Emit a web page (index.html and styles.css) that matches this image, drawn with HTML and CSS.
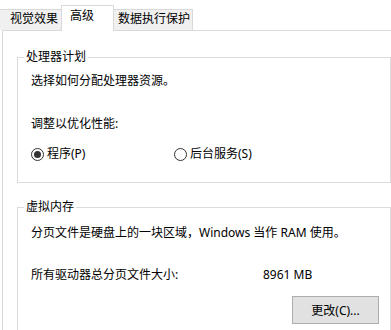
FILE: index.html
```html
<!DOCTYPE html>
<html lang="zh-CN">
<head>
  <meta charset="UTF-8">
  <title>性能选项 - 高级</title>
  <link rel="stylesheet" href="styles.css">
</head>
<body>

<div class="dialog">
  <!-- Tabs -->
  <div class="tabs">
    <div class="tab tab-visual">视觉效果</div>
    <div class="tab tab-advanced active">高级</div>
    <div class="tab tab-dep">数据执行保护</div>
  </div>

  <div class="panel">
    <!-- Processor scheduling -->
    <fieldset class="group group-cpu">
      <legend>处理器计划</legend>
      <p class="line">选择如何分配处理器资源。</p>
      <p class="line line-adjust">调整以优化性能:</p>
      <div class="radio-row">
        <label class="radio radio-programs">
          <span class="radio-mark checked"></span>程序(P)
        </label>
        <label class="radio">
          <span class="radio-mark"></span>后台服务(S)
        </label>
      </div>
    </fieldset>

    <!-- Virtual memory -->
    <fieldset class="group group-vm">
      <legend>虚拟内存</legend>
      <p class="line">分页文件是硬盘上的一块区域，Windows 当作 RAM 使用。</p>
      <div class="size-row">
        <span class="size-label">所有驱动器总分页文件大小:</span>
        <span class="size-value">8961 MB</span>
      </div>
      <div class="button-row">
        <button class="btn">更改(C)...</button>
      </div>
    </fieldset>
  </div>
</div>

</body>
</html>
```

FILE: styles.css
```css
html, body {
  margin: 0;
  background: #fff;
  overflow: hidden;
}

body {
  font-family: "Noto Sans", "Noto Sans CJK SC", sans-serif;
  font-size: 12px;
  line-height: 16px;
  color: #000;
  width: 391px;
  height: 330px;
}

* {
  box-sizing: border-box;
}

.dialog {
  width: 391px;
  height: 330px;
}

/* Tabs */
.tabs {
  display: flex;
  align-items: flex-end;
  height: 30px;
}

.tab {
  height: 21px;
  padding-top: 1px;
  background: #f0f0f0;
  border: 1px solid #d9d9d9;
  border-bottom: none;
  white-space: nowrap;
  margin-left: -1px;
}

.tab-visual {
  width: 62px;
  margin-left: 0;
  border-left: none;
  padding-left: 10px;
}

.tab-advanced {
  width: 53px;
  padding-left: 8px;
}

.tab-dep {
  width: 80px;
  padding-left: 4px;
}

.tab.active {
  position: relative;
  z-index: 1;
  height: 26px;
  margin-bottom: -1px;
  padding-top: 2px;
  background: #fff;
}

/* Panel */
.panel {
  width: 389px;
  height: 300px;
  margin-left: 2px;
  border: 1px solid #d9d9d9;
  border-right: none;
  border-bottom: none;
  padding: 18px 0 0 14px;
  background: #fff;
}

.group {
  width: 374px;
  min-width: 0;
  margin: 0;
  border: 1px solid #dcdcdc;
  padding: 0 11px 0 13px;
}

.group legend {
  margin-left: -7px;
  padding: 0 2px;
  line-height: 16px;
}

.group-cpu {
  padding-top: 8px;
  padding-bottom: 20px;
}

.group-vm {
  margin-top: 16px;
  padding-top: 10px;
  padding-bottom: 6px;
  border-bottom: none;
}

.line {
  margin: 0;
  white-space: nowrap;
}

.line-adjust {
  margin-top: 27px;
}

/* Radios */
.radio-row {
  display: flex;
  margin-top: 14px;
}

.radio {
  display: flex;
  align-items: center;
}

.radio-programs {
  width: 143px;
}

.radio-mark {
  width: 13px;
  height: 13px;
  border: 1px solid #333;
  border-radius: 50%;
  margin-right: 3px;
  display: flex;
  align-items: center;
  justify-content: center;
}

.radio-mark.checked::after {
  content: "";
  width: 7px;
  height: 7px;
  border-radius: 50%;
  background: #333;
}

/* Virtual memory */
.size-row {
  display: flex;
  margin-top: 26px;
}

.size-label {
  width: 232px;
}

.button-row {
  display: flex;
  justify-content: flex-end;
  margin-top: 13px;
}

.btn {
  width: 87px;
  height: 28px;
  padding: 2px 0 0;
  font: inherit;
  color: #000;
  background: #e1e1e1;
  border: 1px solid #adadad;
  border-radius: 0;
}
```
